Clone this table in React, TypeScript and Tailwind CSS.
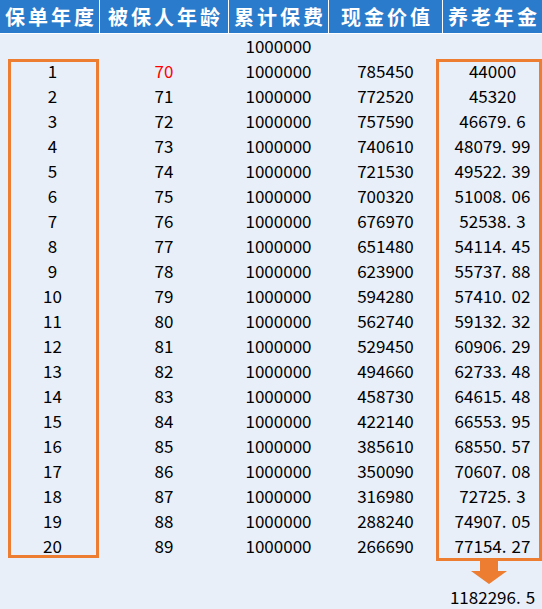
import React from "react";

const rows: [string, string, string, string, string][] = [
  ["1", "70", "1000000", "785450", "44000"],
  ["2", "71", "1000000", "772520", "45320"],
  ["3", "72", "1000000", "757590", "46679.6"],
  ["4", "73", "1000000", "740610", "48079.99"],
  ["5", "74", "1000000", "721530", "49522.39"],
  ["6", "75", "1000000", "700320", "51008.06"],
  ["7", "76", "1000000", "676970", "52538.3"],
  ["8", "77", "1000000", "651480", "54114.45"],
  ["9", "78", "1000000", "623900", "55737.88"],
  ["10", "79", "1000000", "594280", "57410.02"],
  ["11", "80", "1000000", "562740", "59132.32"],
  ["12", "81", "1000000", "529450", "60906.29"],
  ["13", "82", "1000000", "494660", "62733.48"],
  ["14", "83", "1000000", "458730", "64615.48"],
  ["15", "84", "1000000", "422140", "66553.95"],
  ["16", "85", "1000000", "385610", "68550.57"],
  ["17", "86", "1000000", "350090", "70607.08"],
  ["18", "87", "1000000", "316980", "72725.3"],
  ["19", "88", "1000000", "288240", "74907.05"],
  ["20", "89", "1000000", "266690", "77154.27"],
];

const cols = "grid grid-cols-[99px_128px_99px_113px_99px] gap-x-px";
const font = { fontFamily: '"Noto Sans CJK SC", "Noto Sans", sans-serif' };

function Num({ v }: { v: string }) {
  const parts = v.split(".");
  if (parts.length === 1) return <>{v}</>;
  return (
    <>
      {parts[0]}.<span className="ml-[5px]">{parts[1]}</span>
    </>
  );
}

export default function App() {
  return (
    <div className="relative w-[542px] h-[609px] bg-[#e9eff8] overflow-hidden text-black" style={font}>
      <div className={`${cols} bg-white h-[34px] pb-px`}>
        {["保单年度", "被保人年龄", "累计保费", "现金价值", "养老年金"].map((h) => (
          <div
            key={h}
            className="bg-[#2a7bcb] text-white font-bold text-[20px] tracking-[3px] flex items-center justify-center leading-none"
          >
            <span className="ml-[3px]">{h}</span>
          </div>
        ))}
      </div>
      <div className="-mt-px">
        <div className={`${cols} h-[25px] items-center text-[17px] leading-none`}>
          <div />
          <div />
          <div className="text-center">1000000</div>
          <div />
          <div />
        </div>
        {rows.map((r, i) => (
          <div key={i} className={`${cols} h-[25px] items-center text-[17px] leading-none`}>
            <div className="text-center pl-[6px]">{r[0]}</div>
            <div className={`text-center ${i === 0 ? "text-[#ff0000]" : ""}`}>{r[1]}</div>
            <div className="text-center">{r[2]}</div>
            <div className="text-center">{r[3]}</div>
            <div className="text-center">
              <Num v={r[4]} />
            </div>
          </div>
        ))}
        <div className={`${cols} mt-[26px] h-[25px] items-center text-[17px] leading-none`}>
          <div />
          <div />
          <div />
          <div />
          <div className="text-center">
            <Num v="1182296.5" />
          </div>
        </div>
      </div>

      <div className="absolute left-[8px] top-[59px] w-[91px] h-[499px] border-[3px] border-[#ed7d31]" />
      <div className="absolute left-[436px] top-[59px] w-[106px] h-[502px] border-[3px] border-[#ed7d31]" />
      <svg className="absolute left-[470px] top-[561px]" width="38" height="24" viewBox="0 0 38 24">
        <polygon points="10,0 28,0 28,10 37,10 19,23 1,10 10,10" fill="#ed7d31" />
      </svg>
    </div>
  );
}
